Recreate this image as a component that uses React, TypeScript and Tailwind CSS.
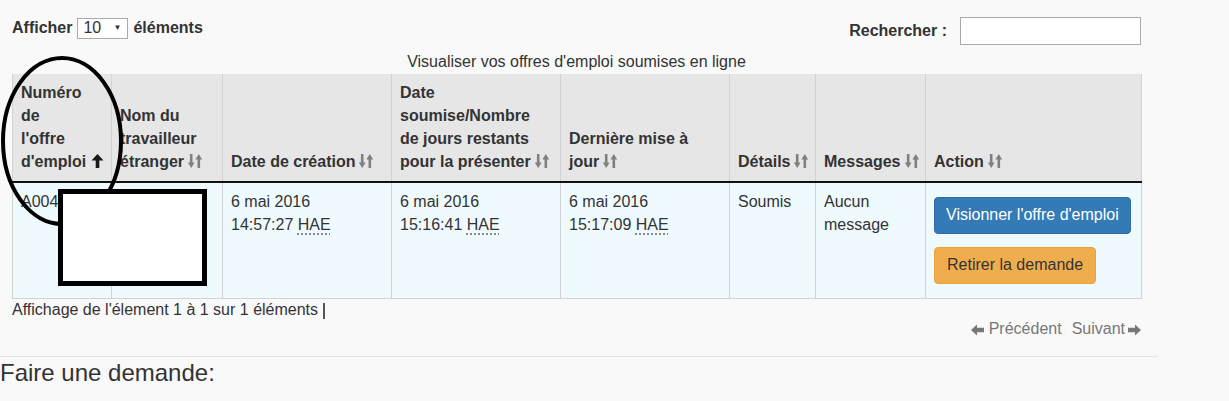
import React from 'react';

const SortIcon = () => (
  <svg width="14" height="16" viewBox="0 0 14 16" className="inline-block align-[-2px] ml-[4px]" fill="#808080">
    <rect x="1.9" y="1" width="2.6" height="9.5" />
    <path d="M-0.2 9.5 L6.6 9.5 L3.2 15 Z" />
    <rect x="9.5" y="5.5" width="2.6" height="9.5" />
    <path d="M7.4 6.5 L14.2 6.5 L10.8 1 Z" />
  </svg>
);

const SortedUp = () => (
  <svg width="13" height="16" viewBox="0 0 13 16" className="inline-block align-[-2px] ml-[5px]" fill="#1a1a1a">
    <path d="M6.5 1 L12.5 7.5 L8.3 7.5 L8.3 15 L4.7 15 L4.7 7.5 L0.5 7.5 Z" />
  </svg>
);

const ArrowLeft = () => (
  <svg width="13" height="12" viewBox="0 0 13 12" className="inline-block mr-[5px]" fill="#777">
    <path d="M0 6 L6 0.5 L6 3.8 L13 3.8 L13 8.2 L6 8.2 L6 11.5 Z" />
  </svg>
);

const ArrowRight = () => (
  <svg width="13" height="12" viewBox="0 0 13 12" className="inline-block ml-[3px]" fill="#777">
    <path d="M13 6 L7 0.5 L7 3.8 L0 3.8 L0 8.2 L7 8.2 L7 11.5 Z" />
  </svg>
);

const Abbr = ({ children }: { children: React.ReactNode }) => (
  <span className="underline decoration-dotted decoration-[#666] underline-offset-[3px]">{children}</span>
);

const th = 'bg-[#e6e6e6] border-x border-[#d2d2d2] border-b-2 border-b-[#111] px-[8px] py-[8px] align-bottom text-left font-bold';
const td = 'bg-[#effafe] border border-[#d2d2d2] border-t-0 px-[8px] py-[8px] align-top text-left font-normal';

export default function App() {
  return (
    <div className="relative min-h-screen bg-[#f9f9f9] text-[#333] text-[16px] leading-[1.42857] font-['Liberation_Sans',Arial,sans-serif] overflow-hidden">
      <div className="w-[1158px]">
        <div className="pl-[12px] w-[1141px]">
          <div className="flex justify-between items-start pt-[17px]">
            <div className="flex items-center h-[22px] font-bold">
              <span>Afficher</span>
              <div className="ml-[5px] mr-[5px] flex items-center justify-between w-[51px] h-[21px] bg-white border border-[#aaa] pl-[5px] pr-[6px] font-normal text-[16px]">
                <span>10</span>
                <span className="text-[8px] text-[#333]">▼</span>
              </div>
              <span>éléments</span>
            </div>
            <div className="flex items-center h-[28px]">
              <span className="font-bold">Rechercher :</span>
              <input className="ml-[13px] w-[181px] h-[28px] bg-white border border-[#aaa] outline-none" />
            </div>
          </div>

          <div className="mt-[6px] text-center h-[23px]">Visualiser vos offres d'emploi soumises en ligne</div>

          <table className="table-fixed w-[1129px] border-collapse">
            <thead>
              <tr>
                <th className={`${th} w-[99px]`}>
                  Numéro<br />de<br />l'offre<br /><span className="whitespace-nowrap">d'emploi<SortedUp /></span>
                </th>
                <th className={`${th} w-[111px]`}>
                  Nom du<br />travailleur<br /><span className="whitespace-nowrap">étranger<SortIcon /></span>
                </th>
                <th className={`${th} w-[169px]`}>
                  <span className="whitespace-nowrap">Date de création<SortIcon /></span>
                </th>
                <th className={`${th} w-[169px]`}>
                  Date<br />soumise/Nombre<br />de jours restants<br />
                  <span className="whitespace-nowrap">pour la présenter<SortIcon /></span>
                </th>
                <th className={`${th} w-[169px]`}>
                  Dernière mise à<br /><span className="whitespace-nowrap">jour<SortIcon /></span>
                </th>
                <th className={`${th} w-[86px]`}>
                  <span className="whitespace-nowrap">Détails<SortIcon /></span>
                </th>
                <th className={`${th} w-[110px]`}>
                  <span className="whitespace-nowrap">Messages<SortIcon /></span>
                </th>
                <th className={`${th} w-[216px]`}>
                  <span className="whitespace-nowrap">Action<SortIcon /></span>
                </th>
              </tr>
            </thead>
            <tbody>
              <tr>
                <td className={`${td} bg-[#e3eef2]`}>A004</td>
                <td className={td}></td>
                <td className={td}>6 mai 2016<br />14:57:27 <Abbr>HAE</Abbr></td>
                <td className={td}>6 mai 2016<br />15:16:41 <Abbr>HAE</Abbr></td>
                <td className={td}>6 mai 2016<br />15:17:09 <Abbr>HAE</Abbr></td>
                <td className={td}>Soumis</td>
                <td className={td}>Aucun<br />message</td>
                <td className={td}>
                  <div className="flex flex-col items-start">
                    <button className="mt-[6px] px-[11px] py-[6px] rounded-[4px] bg-[#337ab7] border border-[#2e6da4] text-white whitespace-nowrap">
                      Visionner l'offre d'emploi
                    </button>
                    <button className="mt-[13px] mb-[6px] px-[12px] py-[6px] rounded-[4px] bg-[#f0ad4e] border border-[#eea236] text-[#333] whitespace-nowrap">
                      Retirer la demande
                    </button>
                  </div>
                </td>
              </tr>
            </tbody>
          </table>

          <div className="flex justify-between items-start">
            <div className="flex items-center h-[23px]">
              Affichage de l'élement 1 à 1 sur 1 éléments
              <span className="ml-[5px] inline-block w-[2px] h-[16px] bg-[#555]" />
            </div>
            <div className="pt-[19px] text-[#777] flex items-center h-[42px]">
              <span className="flex items-center"><ArrowLeft />Précédent</span>
              <span className="ml-[10px] flex items-center">Suivant<ArrowRight /></span>
            </div>
          </div>
        </div>

        <div className="mt-[15px] border-t border-[#e3e3e3]" />
        <h3 className="mt-[3px] text-[24px] leading-[1.1] font-normal">Faire une demande:</h3>
      </div>

      <svg className="absolute left-0 top-[55px]" width="124" height="174" viewBox="0 0 124 174">
        <ellipse cx="62" cy="86" rx="59" ry="83" fill="none" stroke="#000" strokeWidth="4" />
      </svg>
      <div className="absolute left-[58px] top-[189px] w-[149px] h-[97px] bg-white border-[5px] border-black" />
    </div>
  );
}
